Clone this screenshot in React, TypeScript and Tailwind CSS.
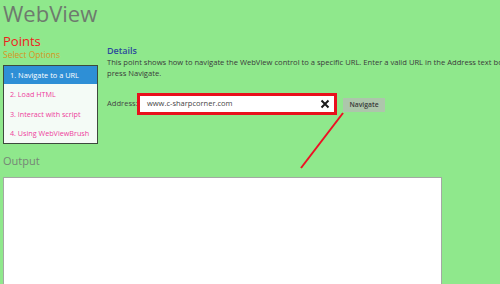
import React from "react";

const items = ["2. Load HTML", "3. Interact with script", "4. Using WebViewBrush"];

function App() {
  return (
    <div
      className="relative w-[500px] h-[284px] overflow-hidden bg-[#8fe88c]"
      style={{ fontFamily: '"Open Sans", "Noto Sans", sans-serif' }}
    >
      <div className="pl-[3px] text-[22px] leading-[27px] text-[#6e7a6e]">WebView</div>

      <div className="flex mt-[6px]">
        <div className="w-[104px] shrink-0 pl-[3px]">
          <div className="text-[13px] leading-[16px] text-[#ee1c1c]">Points</div>
          <div className="text-[8.5px] leading-[11px] text-[#d8951e]">Select Options</div>
          <div className="mt-[5px] w-[95px] h-[79px] border border-[#3d4a3d] bg-[#f4fbf6]">
            <div className="h-[18px] bg-[#2e8fd6] text-white text-[7.4px] leading-[18px] pl-[6px] whitespace-nowrap">
              1. Navigate to a URL
            </div>
            {items.map((t) => (
              <div
                key={t}
                className="h-[19.5px] text-[#ee3c9c] text-[7.2px] leading-[20px] pl-[6px] whitespace-nowrap"
              >
                {t}
              </div>
            ))}
          </div>
        </div>

        <div className="flex-1 pt-[12px] pl-[3px] min-w-0 overflow-hidden">
          <div className="text-[9px] leading-[12px] font-semibold text-[#2c4a9c]">Details</div>
          <div className="text-[7.6px] leading-[11px] text-[#3a3a3a] whitespace-nowrap">
            This point shows how to navigate the WebView control to a specific URL. Enter a valid URL in the Address text box a
          </div>
          <div className="text-[7.6px] leading-[10px] text-[#3a3a3a]">press Navigate.</div>

          <div className="flex items-start mt-[15px]">
            <div className="w-[30px] text-[7.6px] leading-[10px] text-[#444] pt-[5px]">Address:</div>
            <div className="w-[200px] h-[22px] border-[3px] border-[#e8101c] bg-white flex items-center pl-[7px] pr-[4px]">
              <span className="flex-1 text-[7.5px] text-[#444]">www.c-sharpcorner.com</span>
              <svg width="10" height="10" viewBox="0 0 10 10">
                <path d="M1.5 1.5 L8.5 8.5 M8.5 1.5 L1.5 8.5" stroke="#1a1a1a" strokeWidth="2" />
              </svg>
            </div>
            <div className="ml-[6px] mt-[5px] w-[42px] h-[14px] bg-[#adc6ab] text-[6.8px] leading-[14px] text-center font-semibold text-[#3a3a3a]">
              Navigate
            </div>
          </div>
        </div>
      </div>

      <div className="pl-[3px] mt-[10px] text-[11px] leading-[14px] text-[#768576]">Output</div>
      <div className="ml-[3px] mt-[9px] w-[439px] h-[110px] bg-white border border-[#a3a9a3]" />

      <svg className="absolute left-0 top-0 pointer-events-none" width="500" height="284">
        <line x1="343" y1="113" x2="301" y2="168" stroke="#ee1024" strokeWidth="2" />
      </svg>
    </div>
  );
}

export default App;
